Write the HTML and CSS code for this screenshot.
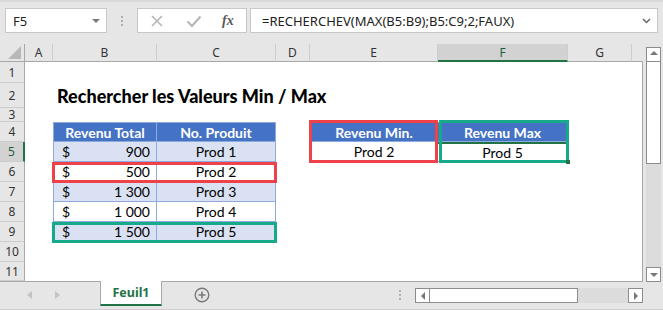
FILE: index.html
```html
<!DOCTYPE html>
<html lang="fr">
<head>
    <meta charset="UTF-8">
    <title>Rechercher les Valeurs Min / Max</title>
    <link rel="stylesheet" href="styles.css">
</head>
<body>
    <!-- Barre de formule -->
    <div class="topbar">
        <div class="namebox">
            <span>F5</span>
            <svg width="8" height="4" viewBox="0 0 8 4"><path d="M0 0H8L4 4Z" fill="#7a7a7a"/></svg>
        </div>
        <div class="grip"><i></i><i></i><i></i></div>
        <div class="fxbtns">
            <svg class="ico" width="14" height="14" viewBox="0 0 14 14"><path d="M2 2L12 12M12 2L2 12" stroke="#b5b5b5" stroke-width="1.6" fill="none"/></svg>
            <svg class="ico" width="16" height="14" viewBox="0 0 16 14"><path d="M1.5 7.5L6 12L14.5 2.5" stroke="#b5b5b5" stroke-width="2" fill="none"/></svg>
            <span class="fx">fx</span>
        </div>
        <div class="formula">
            <span>=RECHERCHEV(MAX(B5:B9);B5:C9;2;FAUX)</span>
            <svg width="9" height="6" viewBox="0 0 9 6"><path d="M1 1L4.5 4.5L8 1" stroke="#666" stroke-width="1.5" fill="none"/></svg>
        </div>
    </div>

    <div class="main">
        <div class="sheet">
            <div class="ch corner"><svg width="13" height="13" viewBox="0 0 13 13"><path d="M13 0V13H0Z" fill="#b8b8b8"/></svg></div>
            <div class="ch">A</div>
            <div class="ch">B</div>
            <div class="ch">C</div>
            <div class="ch">D</div>
            <div class="ch">E</div>
            <div class="ch sel">F</div>
            <div class="ch">G</div>
            <div class="ch last"></div>

            <div class="rh">1</div>
            <div class="rh">2</div>
            <div class="rh">3</div>
            <div class="rh">4</div>
            <div class="rh sel">5</div>
            <div class="rh">6</div>
            <div class="rh">7</div>
            <div class="rh">8</div>
            <div class="rh">9</div>
            <div class="rh">10</div>
            <div class="rh">11</div>

            <div class="title r-2">Rechercher les Valeurs Min / Max</div>

            <div class="cell th c-B r-4">Revenu Total</div>
            <div class="cell th c-C r-4">No. Produit</div>
            <div class="cell num band c-B r-5"><span>$</span><span>900</span></div>
            <div class="cell band c-C r-5">Prod 1</div>
            <div class="cell num c-B r-6"><span>$</span><span>500</span></div>
            <div class="cell c-C r-6">Prod 2</div>
            <div class="cell num band c-B r-7"><span>$</span><span>1&nbsp;300</span></div>
            <div class="cell band c-C r-7">Prod 3</div>
            <div class="cell num c-B r-8"><span>$</span><span>1&nbsp;000</span></div>
            <div class="cell c-C r-8">Prod 4</div>
            <div class="cell num band c-B r-9"><span>$</span><span>1&nbsp;500</span></div>
            <div class="cell band c-C r-9">Prod 5</div>

            <div class="cell th c-E r-4">Revenu Min.</div>
            <div class="cell th c-F r-4">Revenu Max</div>
            <div class="cell c-E r-5">Prod 2</div>
            <div class="cell active c-F r-5">Prod 5</div>

            <!-- cadres de mise en évidence -->
            <div class="hl red hl-b6"></div>
            <div class="hl green hl-b9"></div>
            <div class="hl red hl-e4"></div>
            <div class="hl green hl-f4"></div>
            <div class="handle"></div>
        </div>

        <div class="vscroll">
            <div class="sbtn up"><svg width="8" height="4" viewBox="0 0 8 4"><path d="M0 4H8L4 0Z" fill="#777"/></svg></div>
            <div class="vthumb"></div>
            <div class="vtrack"></div>
            <div class="sbtn down"><svg width="8" height="4" viewBox="0 0 8 4"><path d="M0 0H8L4 4Z" fill="#777"/></svg></div>
        </div>
    </div>

    <!-- Onglets et barre de défilement -->
    <div class="tabbar">
        <div class="nav">
            <svg width="5" height="8" viewBox="0 0 5 8"><path d="M5 0V8L0 4Z" fill="#c4c4c4"/></svg>
            <svg width="5" height="8" viewBox="0 0 5 8"><path d="M0 0V8L5 4Z" fill="#c4c4c4"/></svg>
        </div>
        <div class="tab">Feuil1</div>
        <div class="addsheet">
            <svg width="16" height="16" viewBox="0 0 16 16"><circle cx="8" cy="8" r="6.8" stroke="#7a7a7a" stroke-width="1.4" fill="none"/><path d="M8 4.5V11.5M4.5 8H11.5" stroke="#7a7a7a" stroke-width="1.6"/></svg>
        </div>
        <div class="grip small"><i></i><i></i><i></i></div>
        <div class="hscroll">
            <div class="sbtn"><svg width="4" height="8" viewBox="0 0 4 8"><path d="M4 0V8L0 4Z" fill="#777"/></svg></div>
            <div class="hthumb"></div>
            <div class="htrack"></div>
            <div class="sbtn"><svg width="4" height="8" viewBox="0 0 4 8"><path d="M0 0V8L4 4Z" fill="#777"/></svg></div>
        </div>
    </div>
</body>
</html>
```

FILE: styles.css
```css
* {
    box-sizing: border-box;
}

body {
    margin: 0;
    width: 663px;
    height: 310px;
    overflow: hidden;
    background: #e6e6e6;
    font-family: "Noto Sans", "Open Sans", sans-serif;
    color: #222;
}

/* Barre de formule */
.topbar {
    height: 44px;
    display: flex;
    align-items: flex-start;
    padding: 6px 5px 0 5px;
    border-top: 2px solid #d9d9d9;
}

.namebox {
    width: 102px;
    height: 25px;
    background: #fff;
    border: 1px solid #c8c8c8;
    display: flex;
    align-items: center;
    justify-content: space-between;
    padding: 0 6px 0 7px;
    font-size: 13px;
}

.grip {
    width: 30px;
    height: 25px;
    display: flex;
    flex-direction: column;
    align-items: center;
    justify-content: center;
    gap: 2px;
}

.grip i {
    width: 2px;
    height: 2px;
    background: #b0b0b0;
}

.fxbtns {
    width: 110px;
    height: 25px;
    background: #fff;
    border: 1px solid #c8c8c8;
    display: flex;
    align-items: center;
    padding: 0 0 0 12px;
}

.fxbtns .ico {
    margin-right: 22px;
}

.fx {
    font-family: "Liberation Serif", serif;
    font-style: italic;
    font-weight: bold;
    font-size: 14px;
    color: #5a5a5a;
    margin-left: -2px;
}

.formula {
    flex: 1;
    height: 25px;
    margin-left: 3px;
    background: #fff;
    border: 1px solid #c8c8c8;
    display: flex;
    align-items: center;
    justify-content: space-between;
    padding: 0 6px 0 11px;
    font-size: 13px;
}

/* Feuille */
.main {
    display: flex;
    height: 238px;
}

.sheet {
    width: 643px;
    display: grid;
    grid-template-columns: 25px 28px 104px 119px 34px 128px 130px 64px 11px;
    grid-template-rows: 18px 21px 25px 14px repeat(7, 20px) 19px;
    background: #fff;
    border-right: 1px solid #a8a8a8;
    border-bottom: 1px solid #a8a8a8;
    font-family: "Lato", "Liberation Sans", sans-serif;
    font-size: 14px;
    color: #000;
}

.ch {
    grid-row: 1;
    background: #e6e6e6;
    border-right: 1px solid #cdcdcd;
    border-bottom: 1px solid #a8a8a8;
    display: flex;
    align-items: center;
    justify-content: center;
    font-family: "Noto Sans", sans-serif;
    font-size: 12px;
    color: #333;
}

.ch.corner {
    border-right: 1px solid #a8a8a8;
    justify-content: flex-end;
    align-items: flex-end;
    padding: 0 3px 2px 0;
}

.ch.last {
    border-right: none;
}

.ch.sel {
    background: #d2d2d2;
    color: #1f5c3a;
    border-bottom: 2px solid #217346;
}

.rh {
    grid-column: 1;
    background: #e6e6e6;
    border-right: 1px solid #a8a8a8;
    border-bottom: 1px solid #cdcdcd;
    display: flex;
    align-items: center;
    justify-content: center;
    font-family: "Noto Sans", sans-serif;
    font-size: 12px;
    color: #333;
}

.rh.sel {
    background: #d2d2d2;
    color: #1f5c3a;
    border-right: 2px solid #217346;
}

.c-B { grid-column: 3; }
.c-C { grid-column: 4; }
.c-E { grid-column: 6; }
.c-F { grid-column: 7; }

.r-2 { grid-row: 3; }
.r-4 { grid-row: 5; }
.r-5 { grid-row: 6; }
.r-6 { grid-row: 7; }
.r-7 { grid-row: 8; }
.r-8 { grid-row: 9; }
.r-9 { grid-row: 10; }

.title {
    grid-column: 3 / 8;
    align-self: end;
    padding: 0 0 1px 4px;
    font-weight: 900;
    font-size: 18px;
    white-space: nowrap;
}

.cell {
    display: flex;
    align-items: center;
    justify-content: center;
    border-right: 1px solid #8ea9db;
    border-bottom: 1px solid #8ea9db;
    white-space: nowrap;
}

.cell.c-B,
.cell.c-E {
    border-left: 1px solid #8ea9db;
}

.cell.r-4 {
    border-top: 1px solid #8ea9db;
}

.th {
    background: #4472c4;
    color: #fff;
    font-weight: bold;
}

.band {
    background: #d9e1f2;
}

.num {
    justify-content: space-between;
    padding: 0 6px 0 8px;
}

.cell.active {
    border-top: 2px solid #217346;
}

/* Cadres rouges et verts */
.hl {
    border: 3px solid;
    margin: 0 -1px -1px -1px;
}

.hl.red {
    border-color: #ef4149;
}

.hl.green {
    border-color: #16a98a;
}

.hl-b6 { grid-column: 3 / 5; grid-row: 7; }
.hl-b9 { grid-column: 3 / 5; grid-row: 10; }
.hl-e4 { grid-column: 6; grid-row: 5 / 7; margin: -2px 0 -1px -1px; }
.hl-f4 { grid-column: 7; grid-row: 5 / 7; margin: -2px -1px -1px 1px; }

.handle {
    grid-column: 7;
    grid-row: 6;
    justify-self: end;
    align-self: end;
    width: 4px;
    height: 4px;
    margin: 0 -2px -2px 0;
    background: #217346;
}

/* Défilement vertical */
.vscroll {
    width: 20px;
    display: flex;
    flex-direction: column;
    padding: 3px 2px 0 3px;
}

.sbtn {
    width: 15px;
    height: 15px;
    background: #fff;
    border: 1px solid #8c8c8c;
    display: flex;
    align-items: center;
    justify-content: center;
}

.sbtn.up {
    align-items: flex-start;
    padding-top: 3px;
}

.sbtn.down {
    align-items: flex-end;
    padding-bottom: 4px;
}

.vthumb {
    height: 102px;
    background: #fff;
    border: 1px solid #8c8c8c;
    border-top: none;
}

.vtrack {
    flex: 1;
    background: #dcdcdc;
}

/* Onglets */
.tabbar {
    height: 28px;
    display: flex;
    align-items: flex-start;
    border-bottom: 1px solid #cdcdcd;
}

.nav {
    width: 100px;
    height: 26px;
    display: flex;
    align-items: center;
    gap: 23px;
    padding-left: 27px;
}

.tab {
    width: 62px;
    height: 25px;
    margin-top: -1px;
    background: #fff;
    border-left: 1px solid #a8a8a8;
    border-right: 1px solid #a8a8a8;
    border-bottom: 2px solid #217346;
    display: flex;
    align-items: center;
    justify-content: center;
    font-family: "Noto Sans", sans-serif;
    font-weight: bold;
    font-size: 12.5px;
    color: #217346;
}

.addsheet {
    width: 223px;
    height: 26px;
    display: flex;
    align-items: center;
    padding-left: 32px;
}

.grip.small {
    width: 30px;
    height: 26px;
}

.hscroll {
    display: flex;
    height: 15px;
    margin-top: 6px;
    width: 228px;
}

.hscroll .sbtn {
    height: 15px;
}

.hthumb {
    width: 148px;
    background: #fff;
    border: 1px solid #8c8c8c;
    border-left: none;
}

.htrack {
    flex: 1;
    background: #dcdcdc;
}
```
